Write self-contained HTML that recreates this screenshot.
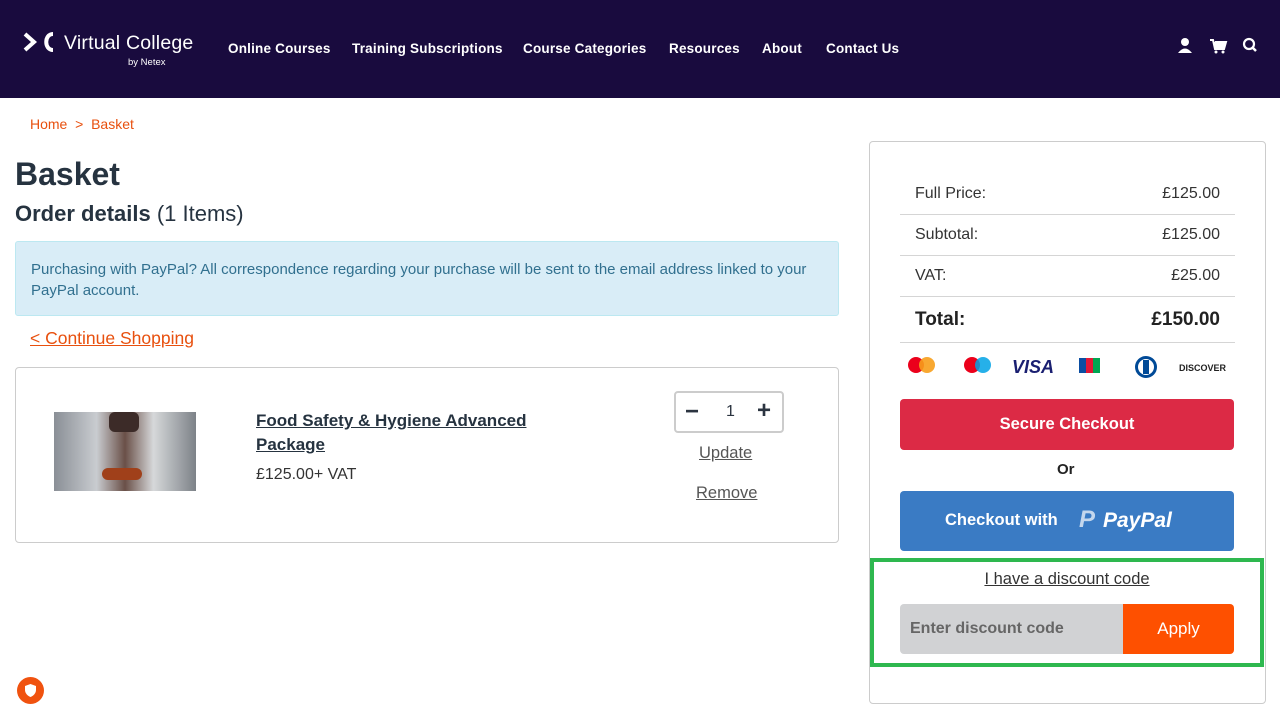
<!DOCTYPE html>
<html><head><meta charset="utf-8"><style>
*{box-sizing:border-box;margin:0;padding:0}
body{width:1280px;height:720px;overflow:hidden;background:#fff;font-family:"Liberation Sans",sans-serif;color:#2b3440;position:relative}
.hdr{position:absolute;left:0;top:0;width:1280px;height:98px;background:#190b3e}
.nav a{position:absolute;top:41px;color:#fff;font-weight:bold;font-size:13.5px;text-decoration:none;letter-spacing:.2px}
.abs{position:absolute}
.row{position:absolute;left:915px;width:305px;font-size:16px;color:#333}
.row span{position:absolute;right:0;top:0}
.line{position:absolute;left:900px;width:335px;height:1px;background:#d5d5d5}
</style></head><body>
<div class="hdr">
<svg class="abs" style="left:22px;top:31px" width="34" height="22" viewBox="0 0 34 22"><path d="M3 3 L12 11 L3 19" stroke="#fff" stroke-width="4" fill="none"/><path d="M31 3 C22 3 22 19 31 19" stroke="#fff" stroke-width="4" fill="none"/></svg>
<div class="abs" style="left:64px;top:32px;color:#fff;font-size:19.5px;letter-spacing:.2px">Virtual College</div>
<div class="abs" style="left:128px;top:57px;color:#fff;font-size:9.5px">by Netex</div>
<div class="nav"><a style="left:228px">Online Courses</a><a style="left:352px">Training Subscriptions</a><a style="left:523px">Course Categories</a><a style="left:669px">Resources</a><a style="left:762px">About</a><a style="left:826px">Contact Us</a></div>
<svg class="abs" style="left:1177px;top:37px" width="80" height="18" viewBox="0 0 80 18"><circle cx="8" cy="5" r="4" fill="#fff"/><path d="M1 16 Q8 7 15 16Z" fill="#fff"/><path d="M33 3h3l2 9h9l2-7H38" stroke="#fff" stroke-width="2" fill="#fff"/><circle cx="39" cy="15" r="1.5" fill="#fff"/><circle cx="46" cy="15" r="1.5" fill="#fff"/><circle cx="72" cy="7" r="5" stroke="#fff" stroke-width="2.2" fill="none"/><path d="M75.5 10.5L79 14" stroke="#fff" stroke-width="2.5"/></svg>
</div>
<div class="abs" style="left:30px;top:116px;font-size:14px;color:#e8500e">Home &nbsp;&gt;&nbsp; Basket</div>
<div class="abs" style="left:15px;top:156px;font-size:32px;font-weight:bold;color:#263340">Basket</div>
<div class="abs" style="left:15px;top:201px;font-size:22px;color:#263340"><b>Order details</b> (1 Items)</div>
<div class="abs" style="left:15px;top:241px;width:824px;height:75px;background:#d9edf7;border:1px solid #bce8f1;border-radius:3px;padding:17px 15px;font-size:15px;line-height:21px;color:#31708f">Purchasing with PayPal? All correspondence regarding your purchase will be sent to the email address linked to your PayPal account.</div>
<div class="abs" style="left:30px;top:328px;font-size:17.5px;color:#e8500e;text-decoration:underline">&lt; Continue Shopping</div>
<div class="abs" style="left:15px;top:367px;width:824px;height:176px;border:1px solid #ccc;border-radius:4px"></div>
<div class="abs" style="left:54px;top:412px;width:142px;height:79px;background:linear-gradient(90deg,#8a8f96 0%,#c9ccd0 30%,#6a5048 50%,#d6d8da 70%,#7d8288 100%)"><div class="abs" style="left:55px;top:0;width:30px;height:20px;background:#3c2b28;border-radius:6px"></div><div class="abs" style="left:48px;top:56px;width:40px;height:12px;background:#a0401a;border-radius:6px"></div></div>
<div class="abs" style="left:256px;top:409px;font-size:17px;font-weight:bold;line-height:24px;text-decoration:underline;color:#263340">Food Safety &amp; Hygiene Advanced<br>Package</div>
<div class="abs" style="left:256px;top:466px;font-size:16px;color:#333">£125.00+ VAT</div>
<div class="abs" style="left:674px;top:391px;width:110px;height:42px;border:2px solid #ccc;border-radius:4px;font-size:16px"><span class="abs" style="left:9px;top:5px;font-size:24px;font-weight:bold">−</span><span class="abs" style="left:50px;top:10px">1</span><span class="abs" style="left:81px;top:4px;font-size:24px;font-weight:bold">+</span></div>
<div class="abs" style="left:699px;top:444px;font-size:16.5px;text-decoration:underline;color:#555">Update</div>
<div class="abs" style="left:696px;top:484px;font-size:16.5px;text-decoration:underline;color:#555">Remove</div>

<div class="abs" style="left:869px;top:141px;width:397px;height:563px;border:1px solid #ccc;border-radius:4px"></div>
<div class="row" style="top:185px">Full Price:<span>£125.00</span></div>
<div class="line" style="top:214px"></div>
<div class="row" style="top:226px">Subtotal:<span>£125.00</span></div>
<div class="line" style="top:255px"></div>
<div class="row" style="top:267px">VAT:<span>£25.00</span></div>
<div class="line" style="top:296px"></div>
<div class="row" style="top:309px;font-size:19px;font-weight:bold;color:#222">Total:<span>£150.00</span></div>
<div class="line" style="top:342px"></div>
<svg class="abs" style="left:906px;top:355px" width="322" height="24" viewBox="0 0 322 24"><circle cx="10" cy="10" r="8" fill="#eb001b"/><circle cx="21" cy="10" r="8" fill="#f79e1b" opacity=".9"/><circle cx="66" cy="10" r="8" fill="#eb001b"/><circle cx="77" cy="10" r="8" fill="#00a2e5" opacity=".85"/><text x="106" y="18" font-family="Liberation Sans" font-weight="bold" font-style="italic" font-size="18" fill="#1a1f71">VISA</text><rect x="173" y="3" width="7" height="15" fill="#0b4ea2"/><rect x="180" y="3" width="7" height="15" fill="#e21836"/><rect x="187" y="3" width="7" height="15" fill="#00a651"/><circle cx="240" cy="12" r="11" fill="#004a97"/><circle cx="240" cy="12" r="8" fill="#fff"/><rect x="237" y="5" width="6" height="14" fill="#004a97"/><text x="273" y="16" font-family="Liberation Sans" font-weight="bold" font-size="9" fill="#222">DISCOVER</text></svg>
<div class="abs" style="left:900px;top:399px;width:334px;height:51px;background:#dc2a45;border-radius:4px;color:#fff;font-weight:bold;font-size:16.5px;text-align:center;line-height:51px">Secure Checkout</div>
<div class="abs" style="left:1057px;top:461px;font-size:15px;font-weight:bold;color:#222">Or</div>
<div class="abs" style="left:900px;top:491px;width:334px;height:60px;background:#3a7bc4;border-radius:4px;color:#fff;font-weight:bold;font-size:16.5px"><span class="abs" style="left:45px;top:20px">Checkout with</span><span class="abs" style="left:179px;top:15px;font-size:24px;font-style:italic;opacity:.7">P</span><span class="abs" style="left:203px;top:18px;font-size:21px;font-style:italic">PayPal</span></div>
<div class="abs" style="left:870px;top:558px;width:394px;height:109px;border:4px solid #2eb84f"></div>
<div class="abs" style="left:870px;width:394px;text-align:center;top:570px;font-size:16.5px"><span style="text-decoration:underline;color:#333">I have a discount code</span></div>
<div class="abs" style="left:900px;top:604px;width:224px;height:50px;background:#d1d2d4;border-radius:4px 0 0 4px;padding:16px 10px;font-size:16px;font-weight:bold;color:#666">Enter discount code</div>
<div class="abs" style="left:1123px;top:604px;width:111px;height:50px;background:#fe5000;border-radius:0 4px 4px 0;color:#fff;font-size:17px;text-align:center;line-height:50px">Apply</div>
<div class="abs" style="left:17px;top:677px;width:27px;height:27px;border-radius:50%;background:#f0520f"><svg class="abs" style="left:8px;top:7px" width="11" height="13" viewBox="0 0 11 13"><path d="M5.5 0L11 2v4c0 3-2.5 6-5.5 7C2.5 12 0 9 0 6V2Z" fill="#fff"/></svg></div>
</body></html>
